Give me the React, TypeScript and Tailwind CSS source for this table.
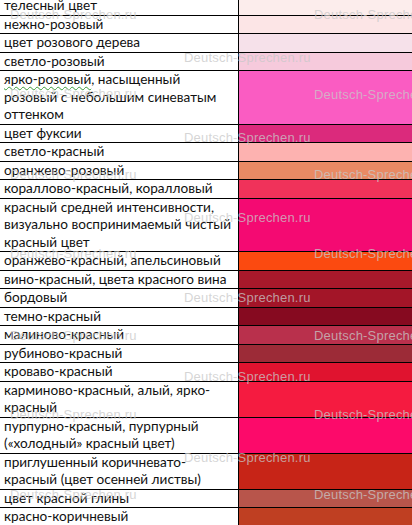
import { Fragment } from 'react'

type ColorRow = {
  lines: string[]
  color: string
  spell?: boolean
}

const rows: ColorRow[] = [
  { lines: ['телесный цвет'], color: '#fcedec' },
  { lines: ['нежно-розовый'], color: '#fce5e6' },
  { lines: ['цвет розового дерева'], color: '#f6e1ea' },
  { lines: ['светло-розовый'], color: '#f6cadc' },
  {
    lines: ['ярко-розовый, насыщенный', 'розовый с небольшим синеватым', 'оттенком'],
    color: '#fa5cc2',
    spell: true,
  },
  { lines: ['цвет фуксии'], color: '#db2a7c' },
  { lines: ['светло-красный'], color: '#fdb2b0' },
  { lines: ['оранжево-розовый'], color: '#e98a64' },
  { lines: ['кораллово-красный, коралловый'], color: '#f0325a' },
  {
    lines: ['красный средней интенсивности,', 'визуально воспринимаемый чистый', 'красный цвет'],
    color: '#f40a72',
  },
  { lines: ['оранжево-красный, апельсиновый'], color: '#fb4a10' },
  { lines: ['вино-красный, цвета красного вина'], color: '#a8192b' },
  { lines: ['бордовый'], color: '#a31528' },
  { lines: ['темно-красный'], color: '#860a20' },
  { lines: ['малиново-красный'], color: '#b9304c' },
  { lines: ['рубиново-красный'], color: '#9c2b37' },
  { lines: ['кроваво-красный'], color: '#e0132f' },
  { lines: ['карминово-красный, алый, ярко-', 'красный'], color: '#f51b40' },
  { lines: ['пурпурно-красный, пурпурный', '(«холодный» красный цвет)'], color: '#fc0a6a' },
  { lines: ['приглушенный коричневато-', 'красный (цвет осенней листвы)'], color: '#c72417' },
  { lines: ['цвет красной глины'], color: '#b8554b' },
  { lines: ['красно-коричневый'], color: '#bf3f22' },
]

// watermark tiles: [left, top]
const marks: [number, number][] = [
  [10, 7], [314, 7], [184, 50], [10, 86], [314, 87], [184, 130],
  [10, 167], [314, 167], [184, 210], [10, 246], [314, 246], [184, 290],
  [10, 328], [314, 328], [184, 369], [10, 407], [314, 407], [184, 450],
  [10, 487], [314, 487],
]

export default function App() {
  return (
    <div className="relative w-[412px] h-[525px] overflow-hidden bg-white">
      <div
        className="-mt-[3px] grid grid-cols-[239px_1fr] text-[13.6px] leading-[17.5px] text-[#111]"
        style={{ fontFamily: 'Lato, "Open Sans", sans-serif' }}
      >
        {rows.map((row, i) => (
          <Fragment key={i}>
            <div className="border-b border-r border-black pl-[4px] whitespace-nowrap">
              {row.lines.map((line, j) => (
                <div key={j}>
                  {row.spell && j === 0 ? (
                    <>
                      <span className="underline decoration-wavy decoration-[#3a9a3a] decoration-1 underline-offset-2">
                        ярко-розовый
                      </span>
                      , насыщенный
                    </>
                  ) : (
                    line
                  )}
                </div>
              ))}
            </div>
            <div className="border-b border-black" style={{ backgroundColor: row.color }} />
          </Fragment>
        ))}
      </div>

      <div className="pointer-events-none absolute inset-0">
        {marks.map(([x, y], i) => (
          <span
            key={i}
            className="absolute whitespace-nowrap text-[13px] leading-[16px] tracking-[0.2px] text-[rgba(200,200,200,0.75)]"
            style={{ left: x, top: y, fontFamily: '"Liberation Sans", Arial, sans-serif' }}
          >
            Deutsch-Sprechen.ru
          </span>
        ))}
      </div>
    </div>
  )
}
